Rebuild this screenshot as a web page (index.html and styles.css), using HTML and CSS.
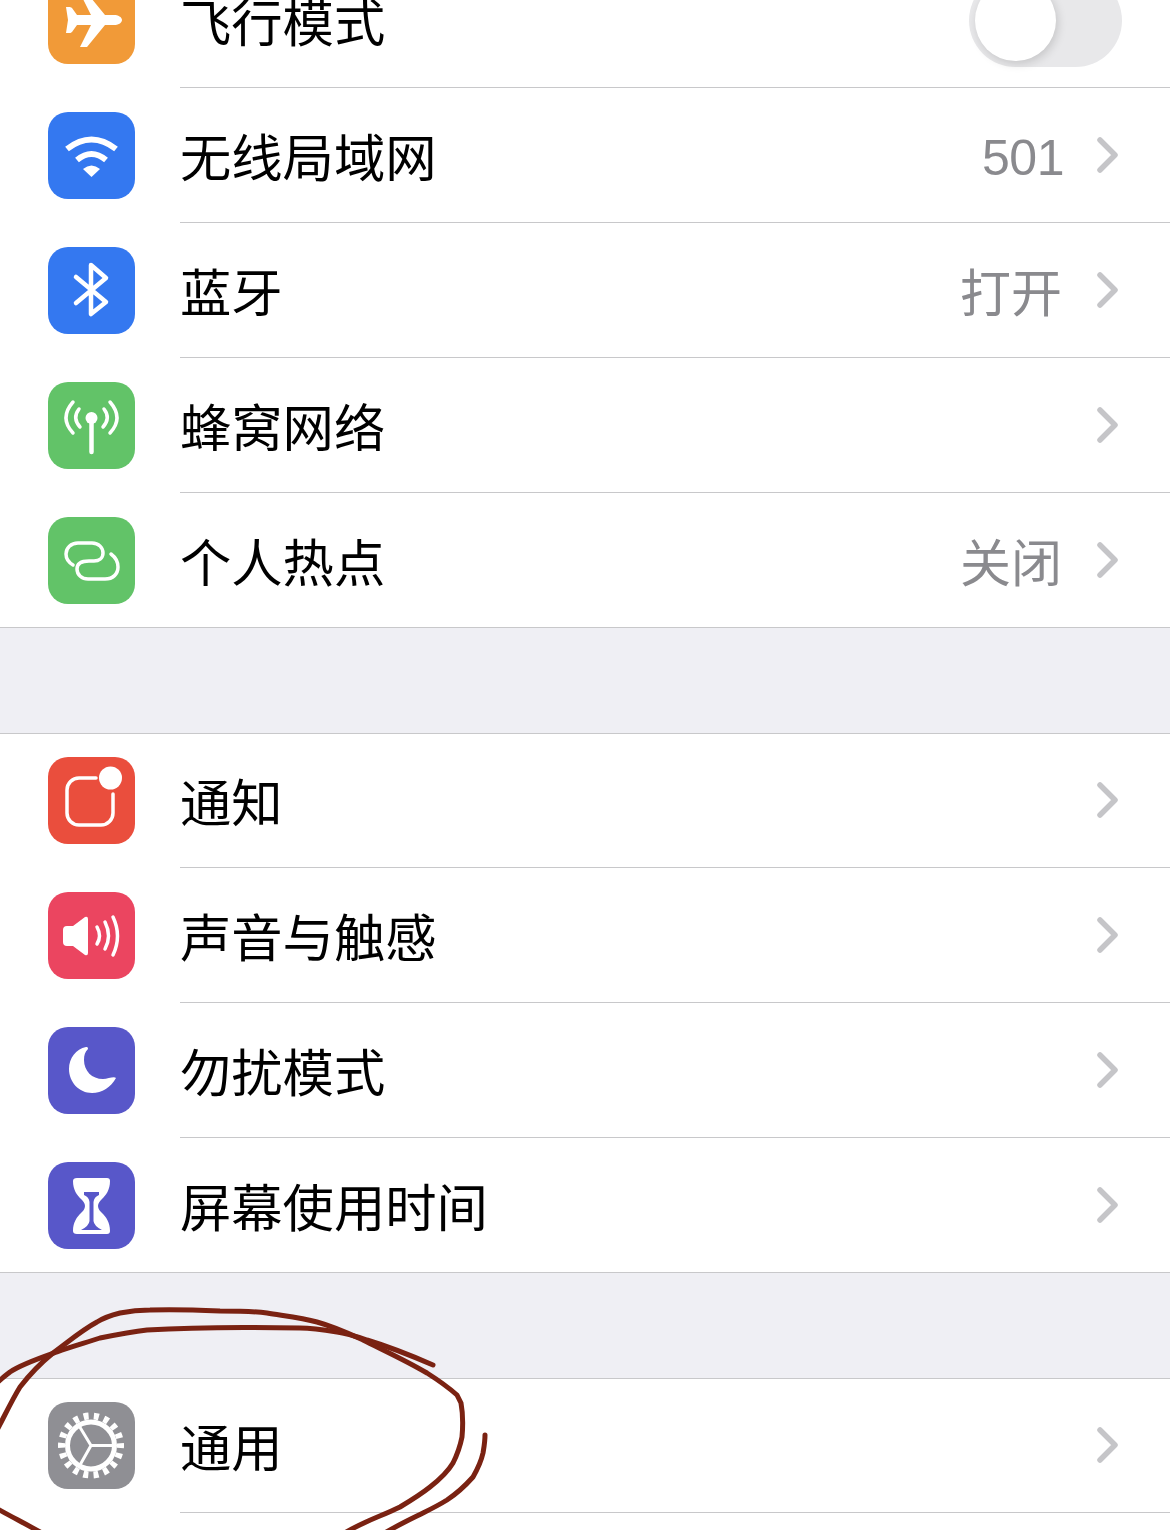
FILE: index.html
```html
<!DOCTYPE html>
<html lang="zh-CN">
<head>
<meta charset="utf-8">
<title>设置</title>
<link rel="stylesheet" href="styles.css">
</head>
<body>
<svg width="0" height="0" class="defs"><defs><symbol id="chev" viewBox="0 0 26 42"><path d="M6 6 L21 21 L6 36" /></symbol></defs></svg>
<main class="screen">
  <ul class="list list-first">
    <li class="row">
      <span class="icon orange"><svg viewBox="0 0 87 87"><path class="fill" d="M74 43c0-3-4-5-8-5H57L39 16H32L43 38H29L24 31c-1-1-2-1-3-1H18L20 43L18 56h3c1 0 2 0 3-1l5-7H43L32 70h7L57 48h9c4 0 8-2 8-5z"/></svg></span>
      <div class="row-body"><span class="label">飞行模式</span><span class="toggle"><span class="knob"></span></span></div>
    </li>
    <li class="row">
      <span class="icon blue"><svg viewBox="0 0 87 87"><path class="line w6" d="M19 37Q43.500 18 68 37"/><path class="line w6" d="M29 48Q43.500 36 58 48"/><path class="fill" d="M35 57Q43.500 50 52 57L43.500 65z"/></svg></span>
      <div class="row-body"><span class="label">无线局域网</span><span class="value value-num">501</span><svg class="chevron"><use href="#chev"/></svg></div>
    </li>
    <li class="row">
      <span class="icon blue"><svg viewBox="0 0 87 87"><path class="line w4" d="M28 30L58 55 43 67V18L58 31 28 56"/></svg></span>
      <div class="row-body"><span class="label">蓝牙</span><span class="value">打开</span><svg class="chevron"><use href="#chev"/></svg></div>
    </li>
    <li class="row">
      <span class="icon green"><svg viewBox="0 0 87 87"><circle class="fill" cx="43.500" cy="36" r="6"/><path class="line w4" d="M43.500 38V70"/><path class="line w3" d="M31 27Q24 36 32 45M25 20Q11 36 25 51M56 27Q63 36 55 45M62 20Q76 36 62 51"/></svg></span>
      <div class="row-body"><span class="label">蜂窝网络</span><svg class="chevron"><use href="#chev"/></svg></div>
    </li>
    <li class="row">
      <span class="icon green"><svg viewBox="0 0 87 87"><path class="line w3" d="M25 48C20 45 18 41 18 37C18 31 23 26 30 26H44C51 26 55 31 55 36C55 41 51 44 46 44H41C34 44 29 46 29 52C29 58 34 62 40 62H57C65 62 70 57 70 50C70 44 67 40 63 37"/></svg></span>
      <div class="row-body"><span class="label">个人热点</span><span class="value">关闭</span><svg class="chevron"><use href="#chev"/></svg></div>
    </li>
  </ul>
  <ul class="list">
    <li class="row">
      <span class="icon red"><svg viewBox="0 0 87 87"><path class="line w3" d="M48 21H31A12 12 0 0 0 19 33V56A12 12 0 0 0 31 68H53A12 12 0 0 0 65 56V37"/><circle class="fill" cx="62.500" cy="21" r="11.500"/></svg></span>
      <div class="row-body"><span class="label">通知</span><svg class="chevron"><use href="#chev"/></svg></div>
    </li>
    <li class="row">
      <span class="icon pink"><svg viewBox="0 0 87 87"><path class="fill" d="M15 38q0-4 4-4h6l12-9q3-1 3 2v34q0 3-3 2L25 54h-6q-4 0-4-4z"/><path class="line w3" d="M49 35Q54 44 49 52M57 30Q64 44 57 57M65 25Q74 44 65 63"/></svg></span>
      <div class="row-body"><span class="label">声音与触感</span><svg class="chevron"><use href="#chev"/></svg></div>
    </li>
    <li class="row">
      <span class="icon indigo"><svg viewBox="0 0 87 87"><path class="fill" d="M38 20C28 22 21 31 21 42C21 55 31 66 44 66C54 66 63 60 68 51C66 49 60 52 55 52C44 52 36 44 36 33C36 28 37 25 40 22C40 20 39 20 38 20z"/></svg></span>
      <div class="row-body"><span class="label">勿扰模式</span><svg class="chevron"><use href="#chev"/></svg></div>
    </li>
    <li class="row">
      <span class="icon indigo"><svg viewBox="0 0 87 87"><path class="fill" d="M29 16H59Q62 16 62 19C62 28 58 33 54 37C52 39 50 41 50 44C50 47 52 49 54 51C58 55 62 60 62 69Q62 72 59 72H29Q25 72 25 69C25 60 29 55 33 51C35 49 37 47 37 44C37 41 35 39 33 37C29 33 25 28 25 19Q25 16 29 16z"/><path class="cut" d="M36 30H51V33Q46 35 45.500 40V59Q46 64 54 68H33Q41 64 41.500 59V40Q41 35 36 33z"/></svg></span>
      <div class="row-body"><span class="label">屏幕使用时间</span><svg class="chevron"><use href="#chev"/></svg></div>
    </li>
  </ul>
  <ul class="list list-open">
    <li class="row">
      <span class="icon gray"><svg viewBox="0 0 87 87"><circle class="teeth" cx="43" cy="43.500" r="29.500"/><circle class="ring" cx="43" cy="43.500" r="23.500"/><path class="line w2" d="M43 43.500H65M43 43.500L31.500 24.500M43 43.500L32 63"/></svg></span>
      <div class="row-body"><span class="label">通用</span><svg class="chevron"><use href="#chev"/></svg></div>
    </li>
  </ul>
  <svg class="scribble" viewBox="0 0 1170 1530" aria-hidden="true">
    <path d="M433 1365C410 1355 390 1347 367 1340C355 1336 345 1333 337 1332C325 1330 312 1328 300 1328C250 1327 195 1327 147 1330C130 1332 115 1335 100 1338C85 1343 70 1347 57 1352C40 1358 22 1364 10 1372C5 1376 2 1378 -4 1384"/>
    <path d="M-4 1432C5 1415 12 1400 20 1387C30 1374 42 1362 53 1353C68 1342 82 1330 97 1322C105 1317 112 1315 120 1313C130 1311 140 1310 150 1310C175 1309 198 1310 220 1311C236 1311 252 1311 267 1313C285 1316 302 1318 317 1322C335 1327 350 1334 363 1340C385 1351 407 1361 427 1373C438 1380 448 1387 457 1395L461 1403C463 1414 463 1426 462 1437C460 1447 457 1455 453 1463C447 1473 439 1480 430 1487C420 1495 410 1501 400 1507C382 1516 362 1522 343 1534"/>
    <path d="M485 1435C485 1442 484 1447 483 1453C481 1462 477 1470 473 1477C465 1486 456 1494 447 1500C439 1505 431 1509 423 1513C411 1519 398 1525 383 1534"/>
    <path d="M-4 1508C10 1516 24 1523 40 1532"/>
  </svg>
</main>
</body>
</html>
```

FILE: styles.css
```css
* {
  box-sizing: border-box;
}

html,
body {
  margin: 0;
  padding: 0;
  background: #efeff4;
}

.defs {
  position: absolute;
}

.screen {
  position: relative;
  display: flex;
  flex-direction: column;
  gap: 105px;
  width: 1170px;
  height: 1530px;
  overflow: hidden;
  font-family: "Noto Sans CJK SC", "Liberation Sans", sans-serif;
}

.list {
  flex: none;
  margin: 0;
  padding: 0;
  list-style: none;
  background: #fff;
  box-shadow: inset 0 1px #c8c8ca;
  border-bottom: 1px solid #c8c8ca;
}

.list-first {
  margin-top: -47px;
}

.list-open {
  flex: 1;
  border-bottom: 0;
}

.row {
  display: flex;
  align-items: center;
  height: 135px;
  padding-left: 48px;
}

.list > .row:last-child {
  height: 134px;
}

.list-open > .row:last-child {
  height: 135px;
}

.list > .row:last-child .row-body {
  border-bottom: 0;
}

.list-open > .row:last-child .row-body {
  border-bottom: 1px solid #c8c8ca;
}

.icon {
  flex: none;
  display: block;
  width: 87px;
  height: 87px;
  border-radius: 20px;
}

.icon svg {
  display: block;
  width: 87px;
  height: 87px;
}

.orange { background: #f19a38; }
.blue { background: #3478f0; }
.green { background: #62c368; }
.red { background: #ea4e3d; }
.pink { background: #eb4560; }
.indigo { background: #5857c9; }
.gray { background: #8f8f94; }

.fill {
  fill: #fff;
}

.cut {
  fill: #5857c9;
}

.line {
  fill: none;
  stroke: #fff;
  stroke-linecap: round;
  stroke-linejoin: round;
}

.w2 { stroke-width: 3px; }
.w3 { stroke-width: 3.500px; }
.w4 { stroke-width: 4.500px; }
.w6 { stroke-width: 6px; stroke-linecap: butt; }

.teeth {
  fill: none;
  stroke: #fff;
  stroke-width: 7px;
  stroke-dasharray: 5 5.297;
  stroke-dashoffset: 2.500;
}

.ring {
  fill: none;
  stroke: #fff;
  stroke-width: 5px;
}

.row-body {
  flex: 1;
  align-self: stretch;
  display: flex;
  align-items: center;
  margin-left: 45px;
  padding-right: 50px;
  border-bottom: 1px solid #c8c8ca;
}

.label {
  flex: 1;
  font-size: 51.300px;
  line-height: 60px;
  color: #000;
}

.value {
  margin-top: 9px;
  margin-right: 32px;
  font-family: "Liberation Sans", "Noto Sans CJK SC", sans-serif;
  font-size: 51px;
  line-height: 60px;
  color: #8a8a8e;
}

.value-num {
  margin-top: 6px;
  margin-right: 30px;
  font-size: 50px;
  letter-spacing: -0.500px;
}

.chevron {
  flex: none;
  width: 26px;
  height: 42px;
  fill: none;
  stroke: #c5c5c8;
  stroke-width: 5.500px;
  stroke-linecap: round;
  stroke-linejoin: round;
}

.toggle {
  flex: none;
  position: relative;
  width: 153px;
  height: 93px;
  margin-right: -2px;
  border-radius: 47px;
  background: #e8e8ea;
}

.knob {
  position: absolute;
  top: 6px;
  left: 6px;
  width: 81px;
  height: 81px;
  border-radius: 50%;
  background: #fff;
  box-shadow: 2px 3px 10px rgba(0, 0, 0, 0.15);
}

.scribble {
  position: absolute;
  top: 0;
  left: 0;
  width: 1170px;
  height: 1530px;
  fill: none;
  stroke: #7a2212;
  stroke-width: 5px;
  stroke-linecap: round;
  stroke-linejoin: round;
  pointer-events: none;
}
```
